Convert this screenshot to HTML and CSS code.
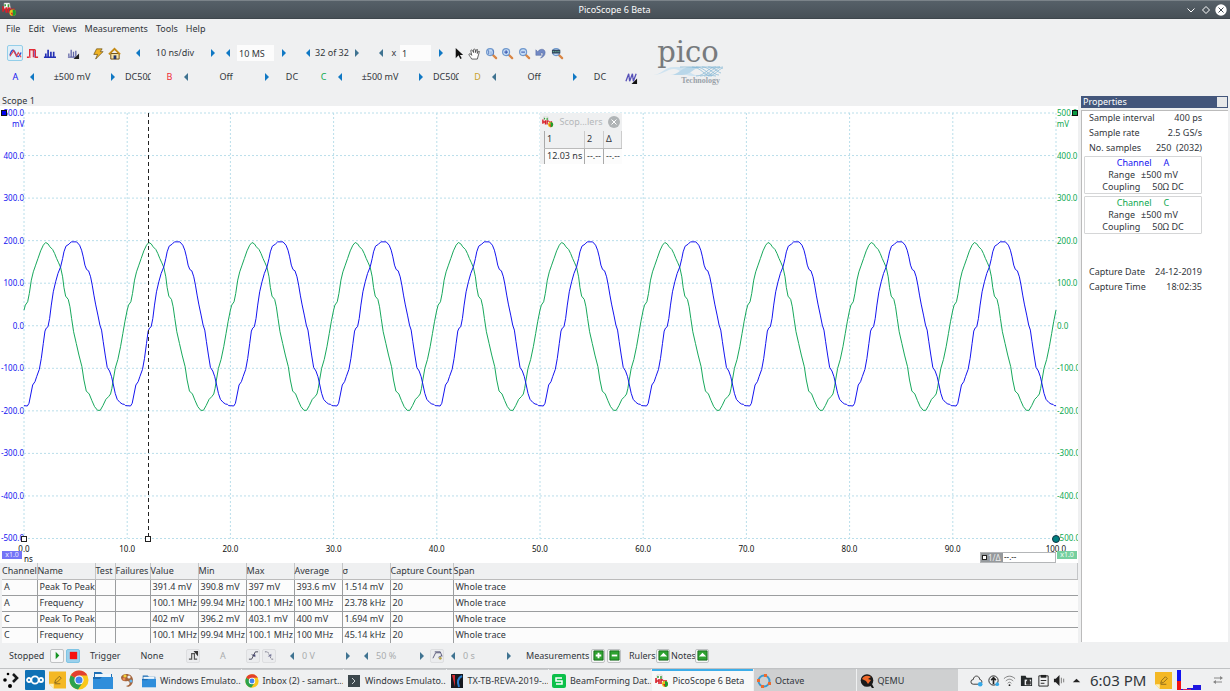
FILE: index.html
```html
<!DOCTYPE html>
<html lang="en">
<head>
<meta charset="utf-8">
<title>PicoScope 6 Beta</title>
<link rel="stylesheet" href="styles.css">
</head>
<body>
<svg class="defs" aria-hidden="true">
  <symbol id="left" viewBox="0 0 8 8"><path d="M6 0v8L2 4z"/></symbol>
  <symbol id="right" viewBox="0 0 8 8"><path d="M2 0v8l4-4z"/></symbol>
  <symbol id="beta" viewBox="0 0 14 14"><path d="M2 1h5l1 5H2z" fill="#fff" stroke="#bbb" stroke-width=".5"/><path d="M3 2v2M6 2v3" stroke="#3a9a3a" stroke-width="1.5"/><path d="M1 4v5M1 7h3M4 5v5M6 5v5M6 6h2M9 6v4M11 6v3" stroke="#d8202a" stroke-width="1.6"/><circle cx="10" cy="10" r="3" fill="#e8c51c"/><path d="M10 7a3 3 0 0 1 0 6z" fill="#1d9a32"/><path d="M8 10h2v3z" fill="#d22"/></symbol>
  <symbol id="lens" viewBox="0 0 14 14"><path d="M8 8l4 4" stroke="#d98645" stroke-width="2.4" stroke-linecap="round"/><circle cx="5.5" cy="5.5" r="3.8" fill="#c5dcf5" stroke="#6f97cc" stroke-width="1.2"/></symbol>
  <symbol id="folder" viewBox="0 0 20 18"><path d="M1 1h7l2 2h9v3H1z" fill="#1f6fb5"/><path d="M2 3h16v4H2z" fill="#eef6fc"/><path d="M0 6h20v12H0z" fill="#2f8edb"/><path d="M0 6h9l-2 2H0z" fill="#1d6db3"/></symbol>
  <symbol id="chrome" viewBox="0 0 20 20"><circle cx="10" cy="10" r="9.5" fill="#f9c81c"/><path d="M10 10L1.8 5.2A9.5 9.5 0 0 0 9 19.4L14 12z" fill="#2ba24c"/><path d="M10 10L1.8 5.2A9.5 9.5 0 0 1 18.4 5.5H10z" fill="#e3402f"/><circle cx="10" cy="10" r="4.6" fill="#fff"/><circle cx="10" cy="10" r="3.5" fill="#4384ee"/></symbol>
  <symbol id="note" viewBox="0 0 18 18"><path d="M0 0h18v18H5L0 13z" fill="#f4b824"/><path d="M0 13h5v5z" fill="#fff0b5"/><path d="M6 12l1-3 4-4 2 2-4 4zM6 13h6" fill="none" stroke="#8b6a1c"/></symbol>
</svg>

<header class="titlebar">
  <svg class="app-icon"><use href="#beta"/></svg>
  <h1>PicoScope 6 Beta</h1>
  <div class="window-buttons">
    <button aria-label="Minimize"><svg viewBox="0 0 12 12"><path d="M2.5 4.5L6 8l3.500-3.500" fill="none" stroke="#fff"/></svg></button>
    <button aria-label="Maximize"><svg viewBox="0 0 12 12"><path d="M6 2.500L9.500 6 6 9.500 2.500 6z" fill="none" stroke="#fff"/></svg></button>
    <button aria-label="Close"><svg viewBox="0 0 12 12"><circle cx="6" cy="6" r="5.7" fill="#fff"/><path d="M3.5 3.5l5 5M8.500 3.500l-5 5" stroke="#3f4a52"/></svg></button>
  </div>
</header>

<nav class="menubar">
  <button>File</button><button>Edit</button><button>Views</button><button>Measurements</button><button>Tools</button><button>Help</button>
</nav>

<section class="toolbars">
  <div class="rows">
    <div class="row">
      <div class="set modes">
        <button class="tool active" aria-label="Scope"><svg viewBox="0 0 14 14"><path d="M1 9c2-7 4-7 6-2s4 4 6-1" fill="none" stroke="#2a55d4" stroke-width="1.4"/><path d="M1 10l4-6 3 6 2-4 3 5" fill="none" stroke="#e2404a" stroke-width="1.2"/></svg></button>
        <button class="tool" aria-label="Persistence"><svg viewBox="0 0 14 14"><path d="M1 11h3V3h4v8M10 3v8h3M4 3h6" fill="none" stroke="#e22b36" stroke-width="1.5"/><path d="M3 11h2V4" fill="none" stroke="#f2a0a4"/><path d="M9 4v7" stroke="#7c6ad0"/></svg></button>
        <button class="tool" aria-label="Spectrum"><svg viewBox="0 0 14 14"><path d="M1 11h13M3 11V7M5.500 11V3M8.500 11V5M11.500 11V5" stroke="#2330b4" stroke-width="1.8"/></svg></button>
      </div>
      <div class="set spaced">
        <button class="tool" aria-label="Channel options"><svg viewBox="0 0 14 14"><path d="M2 10V7M4.500 11V3M7 11V5M9.500 10V4M1 11h9" stroke="#6166a8" stroke-width="1.4"/><path d="M13 7v6H7z" fill="#222"/></svg></button>
        <button class="tool" aria-label="Auto setup"><svg viewBox="0 0 14 14"><path d="M6 2h6l-2 3h3l-8 8 2-5H3z" fill="#f0b323" stroke="#5b4210" stroke-width=".7"/></svg></button>
      </div>
      <button class="tool" aria-label="Home"><svg viewBox="0 0 14 14"><path d="M3 7h9v6H3z" fill="#f7e2a0" stroke="#6a4a10"/><path d="M1 8l6-6 6 6" fill="none" stroke="#c48a14" stroke-width="2"/><path d="M6 9h3v4H6z" fill="#24356e"/></svg></button>
      <div class="stepper timebase"><button class="arrow" aria-label="Less time"><svg><use href="#left"/></svg></button><button class="value">10 ns/div</button><button class="arrow" aria-label="More time"><svg><use href="#right"/></svg></button></div>
      <div class="stepper"><button class="arrow" aria-label="Fewer samples"><svg><use href="#left"/></svg></button><input class="samples" aria-label="Samples" value="10 MS"><button class="arrow" aria-label="More samples"><svg><use href="#right"/></svg></button></div>
      <div class="stepper buffer"><button class="arrow" aria-label="Previous buffer"><svg><use href="#left"/></svg></button><button class="count">32 of 32</button><button class="arrow dim" aria-label="Next buffer"><svg><use href="#right"/></svg></button></div>
      <div class="stepper buffer"><button class="arrow dim" aria-label="Zoom less"><svg><use href="#left"/></svg></button><label class="times" for="zoom">x</label><input class="zoom" id="zoom" value="1"><button class="arrow" aria-label="Zoom more"><svg><use href="#right"/></svg></button></div>
      <div class="pointers">
        <button class="tool" aria-label="Select"><svg viewBox="0 0 14 14"><path d="M4 1v11l3-3 2 4 1.500-1-2-3.500H12z" fill="#111"/></svg></button>
        <button class="tool" aria-label="Hand"><svg viewBox="0 0 14 14"><path d="M4 13c-1-2-3-4-3-5s2-1 3 1L3 4c0-1 1-1 2 0l1 2V3c0-1 1.500-1 2 0v3l1-3c1-1 2 0 1 1v3l1-2c1-1 2 0 1 1l-2 7z" fill="#fff" stroke="#333" stroke-width=".8"/></svg></button>
        <button class="tool" aria-label="Window zoom"><svg viewBox="0 0 14 14"><use href="#lens"/><path d="M3 4h1v4M6.500 5v1M6.500 7v1M8 4h1v4" fill="none" stroke="#5577bb"/></svg></button>
        <button class="tool" aria-label="Zoom in"><svg viewBox="0 0 14 14"><use href="#lens"/><path d="M3.500 5.500h4M5.500 3.500v4" stroke="#2746a8"/></svg></button>
        <button class="tool" aria-label="Zoom out"><svg viewBox="0 0 14 14"><use href="#lens"/><path d="M3.500 5.500h4" stroke="#2746a8"/></svg></button>
        <button class="tool" aria-label="Undo zoom"><svg viewBox="0 0 14 14"><path d="M4 5c3-4 8-3 8 1 0 3-2 5-5 6 3-3 4-7 0-5l1 2H2V3z" fill="#7289c4" stroke="#4b5f98" stroke-width=".5"/></svg></button>
        <button class="tool" aria-label="Full view"><svg viewBox="0 0 14 14"><use href="#lens"/><path d="M1 3h9v4H1z" fill="#33475e"/><path d="M2 5h7" stroke="#7de0b0" stroke-dasharray="1 1"/></svg></button>
      </div>
    </div>
    <div class="row">
      <div class="channel"><button class="letter a">A</button><button class="arrow" aria-label="A range down"><svg><use href="#left"/></svg></button><button class="range">±500 mV</button><button class="arrow" aria-label="A range up"><svg><use href="#right"/></svg></button><button class="coupling">DC50Ω</button></div>
      <div class="channel"><button class="letter b">B</button><button class="arrow dim" aria-label="B range down"><svg><use href="#left"/></svg></button><button class="range">Off</button><button class="arrow" aria-label="B range up"><svg><use href="#right"/></svg></button><button class="coupling">DC</button></div>
      <div class="channel"><button class="letter c">C</button><button class="arrow" aria-label="C range down"><svg><use href="#left"/></svg></button><button class="range">±500 mV</button><button class="arrow" aria-label="C range up"><svg><use href="#right"/></svg></button><button class="coupling">DC50Ω</button></div>
      <div class="channel"><button class="letter d">D</button><button class="arrow dim" aria-label="D range down"><svg><use href="#left"/></svg></button><button class="range">Off</button><button class="arrow" aria-label="D range up"><svg><use href="#right"/></svg></button><button class="coupling">DC</button></div>
      <button class="tool" aria-label="Digital channels"><svg viewBox="0 0 14 14"><path d="M1 11l3-8 1 8 3-8 1 8 3-8" fill="none" stroke="#5650b8" stroke-width="1.4"/><path d="M13 8v6H7z" fill="#111"/></svg></button>
    </div>
  </div>
  <div class="logo">
    <span class="brand">pico</span>
    <svg viewBox="0 0 72 11" aria-hidden="true"><path d="M0 9C10 9 12 1 22 1h6c8 0 10 9 20 9h-8C32 10 28 3 22 3 14 3 12 9 0 9z" fill="#cfe3f0"/><path d="M18 9C27 9 29 1 38 1h12c-8 0-11 8-20 8z" fill="#b9d7e9"/><g fill="none" stroke="#7fb4d4" stroke-width=".7"><path d="M44 10C53 10 56 1 64 1M48 10C57 10 60 1 68 1M52 10C61 10 64 1 71 1M56 10c7 0 10-7 15-8M40 1c9 0 12 9 20 9M44 1c9 0 12 9 20 9M50 1c8 0 11 8 17 8M56 1c7 0 9 5 13 6M28 1h40"/></g></svg>
    <span class="tagline">Technology</span>
  </div>
</section>

<main class="workspace">
  <section class="scope">
    <h2>Scope 1</h2>
    <div class="stage">
      <div class="axis-y left"><span>500.0</span><span>400.0</span><span>300.0</span><span>200.0</span><span>100.0</span><span>0.0</span><span>-100.0</span><span>-200.0</span><span>-300.0</span><span>-400.0</span><span>-500.0</span></div>
      <div class="plot">
        <svg class="grid">
          <g class="lines">
            <line x1="0" x2="100%" y1="0" y2="0"/><line x1="0" x2="100%" y1="10%" y2="10%"/><line x1="0" x2="100%" y1="20%" y2="20%"/><line x1="0" x2="100%" y1="30%" y2="30%"/><line x1="0" x2="100%" y1="40%" y2="40%"/><line x1="0" x2="100%" y1="50%" y2="50%"/><line x1="0" x2="100%" y1="60%" y2="60%"/><line x1="0" x2="100%" y1="70%" y2="70%"/><line x1="0" x2="100%" y1="80%" y2="80%"/><line x1="0" x2="100%" y1="90%" y2="90%"/><line x1="0" x2="100%" y1="100%" y2="100%"/>
            <line y1="0" y2="100%" x1="0" x2="0"/><line y1="0" y2="100%" x1="10%" x2="10%"/><line y1="0" y2="100%" x1="20%" x2="20%"/><line y1="0" y2="100%" x1="30%" x2="30%"/><line y1="0" y2="100%" x1="40%" x2="40%"/><line y1="0" y2="100%" x1="50%" x2="50%"/><line y1="0" y2="100%" x1="60%" x2="60%"/><line y1="0" y2="100%" x1="70%" x2="70%"/><line y1="0" y2="100%" x1="80%" x2="80%"/><line y1="0" y2="100%" x1="90%" x2="90%"/><line y1="0" y2="100%" x1="100%" x2="100%"/>
          </g>
        </svg>
        <svg class="traces" viewBox="70 -352 3100 1278" preserveAspectRatio="none">
          <defs>
            <path id="wave-a" d="M70 527L80 528 85 520 90 495 96 465 103 455 108 440 116 418 122 385 128 340 133 303 137 294 142 290 147 265 152 225 158 185 165 155 172 130 180 110 186 85 190 65 196 48 205 42 212 35 228 35 237 45 243 60 248 80 253 105 258 118 264 122 270 140 275 165 280 195 285 222 292 255 298 285 303 300 308 335 314 375 320 412 327 423 333 440 338 462 344 490 350 508 358 517 365 522 371 523 375 527 380 527"/>
            <path id="wave-c" d="M70 240L74 225 81 215 86 190 92 150 98 125 105 105 112 85 120 62 128 45 135 37 142 41 148 50 156 58 162 70 168 85 174 98 180 112 186 140 190 172 195 198 203 208 208 230 213 265 219 305 227 340 235 375 244 410 250 450 257 483 266 492 274 512 282 530 291 541 299 541 307 527 316 508 324 500 330 492 334 475 338 450 344 415 352 388 360 350 367 310 373 275 380 240"/>
          </defs>
          <g class="trace-c"><use href="#wave-c"/><use href="#wave-c" x="310"/><use href="#wave-c" x="620"/><use href="#wave-c" x="930"/><use href="#wave-c" x="1240"/><use href="#wave-c" x="1550"/><use href="#wave-c" x="1860"/><use href="#wave-c" x="2170"/><use href="#wave-c" x="2480"/><use href="#wave-c" x="2790"/></g>
          <g class="trace-a"><use href="#wave-a"/><use href="#wave-a" x="310"/><use href="#wave-a" x="620"/><use href="#wave-a" x="930"/><use href="#wave-a" x="1240"/><use href="#wave-a" x="1550"/><use href="#wave-a" x="1860"/><use href="#wave-a" x="2170"/><use href="#wave-a" x="2480"/><use href="#wave-a" x="2790"/></g>
        </svg>
        <i class="ruler"></i>
        <i class="handle origin"></i><i class="handle first"></i><i class="handle dot"></i>
        <section class="legend">
          <header><svg><use href="#beta"/></svg><span>Scop...lers</span><button aria-label="Close legend"><svg viewBox="0 0 12 12"><circle cx="6" cy="6" r="6" fill="#b0b4b6"/><path d="M3.500 3.500l5 5M8.500 3.500l-5 5" stroke="#fff"/></svg></button></header>
          <table><tr><th>1</th><th>2</th><th>Δ</th></tr><tr><td>12.03 ns</td><td>--.--</td><td>--.--</td></tr></table>
        </section>
      </div>
      <div class="axis-y right"><span>500.0</span><span>400.0</span><span>300.0</span><span>200.0</span><span>100.0</span><span>0.0</span><span>-100.0</span><span>-200.0</span><span>-300.0</span><span>-400.0</span><span>-500.0</span></div>
      <div class="axis-x"><span>0.0</span><span>10.0</span><span>20.0</span><span>30.0</span><span>40.0</span><span>50.0</span><span>60.0</span><span>70.0</span><span>80.0</span><span>90.0</span><span>100.0</span></div>
      <span class="unit left-unit">mV</span><span class="unit right-unit">mV</span><span class="unit time-unit">ns</span>
      <i class="marker marker-a"></i><i class="marker marker-c"></i>
      <span class="scale scale-a">x1.0</span><span class="scale scale-c">x1.0</span>
      <div class="inverse"><b><i></i>1/Δ</b><span>--.--</span></div>
    </div>
    <table class="measurements">
      <colgroup><col class="w-channel"><col class="w-name"><col class="w-test"><col class="w-fail"><col class="w-num"><col class="w-num"><col class="w-num"><col class="w-num"><col class="w-num"><col class="w-count"><col></colgroup>
      <thead><tr><th>Channel</th><th>Name</th><th>Test</th><th>Failures</th><th>Value</th><th>Min</th><th>Max</th><th>Average</th><th>σ</th><th>Capture Count</th><th>Span</th></tr></thead>
      <tbody>
        <tr><td>A</td><td>Peak To Peak</td><td></td><td></td><td>391.4 mV</td><td>390.8 mV</td><td>397 mV</td><td>393.6 mV</td><td>1.514 mV</td><td>20</td><td>Whole trace</td></tr>
        <tr><td>A</td><td>Frequency</td><td></td><td></td><td>100.1 MHz</td><td>99.94 MHz</td><td>100.1 MHz</td><td>100 MHz</td><td>23.78 kHz</td><td>20</td><td>Whole trace</td></tr>
        <tr><td>C</td><td>Peak To Peak</td><td></td><td></td><td>402 mV</td><td>396.2 mV</td><td>403.1 mV</td><td>400 mV</td><td>1.694 mV</td><td>20</td><td>Whole trace</td></tr>
        <tr><td>C</td><td>Frequency</td><td></td><td></td><td>100.1 MHz</td><td>99.94 MHz</td><td>100.1 MHz</td><td>100 MHz</td><td>45.14 kHz</td><td>20</td><td>Whole trace</td></tr>
      </tbody>
    </table>
  </section>
  <aside class="properties">
    <header><h2>Properties</h2><button aria-label="Close properties"></button></header>
    <div class="panel">
      <dl><dt>Sample interval</dt><dd>400 ps</dd><dt>Sample rate</dt><dd>2.5 GS/s</dd><dt>No. samples</dt><dd>250&nbsp; (2032)</dd></dl>
      <section class="card"><h3 class="a"><span>Channel</span><span>A</span></h3><p class="near"><span>Range</span><span>±500 mV</span></p><p><span>Coupling</span><span>50Ω DC</span></p></section>
      <section class="card"><h3 class="c"><span>Channel</span><span>C</span></h3><p class="near"><span>Range</span><span>±500 mV</span></p><p><span>Coupling</span><span>50Ω DC</span></p></section>
      <dl class="capture"><dt>Capture Date</dt><dd>24-12-2019</dd><dt>Capture Time</dt><dd>18:02:35</dd></dl>
    </div>
  </aside>
</main>

<section class="controls">
  <span class="status">Stopped</span>
  <button class="key" aria-label="Start"><svg viewBox="0 0 12 12"><path d="M4 2v8l4-4z" fill="#159322"/></svg></button>
  <button class="key pressed" aria-label="Stop"><svg viewBox="0 0 12 12"><path d="M2 2h8v8H2z" fill="#f51010"/></svg></button>
  <span class="trigger">Trigger</span>
  <button class="mode">None</button>
  <button class="key faint advanced" aria-label="Advanced trigger"><svg viewBox="0 0 12 12"><path d="M1 10h3V4h3v6h3" fill="none" stroke="#555" stroke-width="1.300"/><path d="M6 1h5v6z" fill="#333"/></svg></button>
  <span class="source muted">A</span>
  <button class="key faint" aria-label="Rising edge"><svg viewBox="0 0 12 12"><path d="M1 10h3l4-8h3M4 5l3 2" fill="none" stroke="#445"/><path d="M5 5h3v3z" fill="#447"/></svg></button>
  <button class="key faint" aria-label="Falling edge"><svg viewBox="0 0 12 12"><path d="M1 2h3l4 8h3" fill="none" stroke="#778" stroke-dasharray="2 1"/><path d="M4 7h4V4z" fill="#779"/></svg></button>
  <div class="field level"><button class="arrow dim" aria-label="Lower threshold"><svg><use href="#left"/></svg></button><span class="muted">0 V</span><button class="arrow dim" aria-label="Raise threshold"><svg><use href="#right"/></svg></button></div>
  <div class="field"><button class="arrow dim" aria-label="Less pre-trigger"><svg><use href="#left"/></svg></button><span class="muted">50 %</span><button class="arrow dim" aria-label="More pre-trigger"><svg><use href="#right"/></svg></button></div>
  <button class="key faint" aria-label="Post-trigger delay"><svg viewBox="0 0 12 12"><path d="M1 9l3-6h5M3 2h6l2 5M7 8l4-2" fill="none" stroke="#557"/><circle cx="9" cy="9" r="1.500" fill="#b8a34a"/></svg></button>
  <div class="field"><button class="arrow dim" aria-label="Less delay"><svg><use href="#left"/></svg></button><span class="muted">0 s</span><button class="arrow dim" aria-label="More delay"><svg><use href="#right"/></svg></button></div>
  <span class="measure">Measurements</span>
  <button class="key" aria-label="Add measurement"><svg viewBox="0 0 12 12"><path d="M1 1h10v10H1z" fill="#2fa331" stroke="#176a1b"/><path d="M3 6h6M6 3v6" stroke="#fff" stroke-width="2"/></svg></button>
  <button class="key" aria-label="Remove measurement"><svg viewBox="0 0 12 12"><path d="M1 1h10v10H1z" fill="#2fa331" stroke="#176a1b"/><path d="M3 6h6" stroke="#fff" stroke-width="2"/></svg></button>
  <span class="rulers">Rulers</span>
  <button class="key" aria-label="Show rulers"><svg viewBox="0 0 12 12"><path d="M1 1h10v10H1z" fill="#2fa331" stroke="#176a1b"/><path d="M2 7h8L6 3z" fill="#fff"/></svg></button>
  <span class="notes">Notes</span>
  <button class="key" aria-label="Show notes"><svg viewBox="0 0 12 12"><path d="M1 1h10v10H1z" fill="#2fa331" stroke="#176a1b"/><path d="M2 7h8L6 3z" fill="#fff"/></svg></button>
</section>

<footer class="taskbar">
  <div class="launchers">
    <button aria-label="Application menu"><svg viewBox="0 0 20 20"><path d="M12 4l4 4-4 4" fill="none" stroke="#16191b" stroke-width="2.600"/><circle cx="7" cy="4" r="1.300"/><circle cx="4" cy="10" r="1.800"/><circle cx="9" cy="16" r="2"/></svg></button>
    <button aria-label="Nextcloud"><svg viewBox="0 0 20 20"><rect width="20" height="20" rx="1" fill="#0f71b5"/><g fill="none" stroke="#fff" stroke-width="1.800"><circle cx="10" cy="10" r="3.600"/><circle cx="4" cy="10" r="2"/><circle cx="16" cy="10" r="2"/></g></svg></button>
    <button aria-label="Sticky notes"><svg class="small"><use href="#note"/></svg></button>
    <button aria-label="Chrome"><svg><use href="#chrome"/></svg></button>
    <button aria-label="Files"><svg><use href="#folder"/></svg></button>
    <button aria-label="Palette"><svg viewBox="0 0 20 20"><path d="M4 7c2-5 12-4 12 3 0 6-5 8-7 6 5-1 4-4 2-5-4 1-7 0-7-4z" fill="#a4643a"/><circle cx="8" cy="6" r="1.600" fill="#f4d23a"/><circle cx="12" cy="7" r="1.600" fill="#eee"/><circle cx="14" cy="11" r="1.600" fill="#6ab4e8"/><circle cx="7" cy="9" r="1.500" fill="#f08a52"/></svg></button>
  </div>
  <div class="tasks">
    <button><svg><use href="#folder"/></svg>Windows Emulato...</button>
    <button><svg><use href="#chrome"/></svg>Inbox (2) - samart...</button>
    <button><svg viewBox="0 0 14 14"><path d="M1 1h12v12H1z" fill="#3d484d"/><path d="M5 4l3 3-3 3" fill="none" stroke="#cfd6d9"/></svg>Windows Emulato...</button>
    <button><svg viewBox="0 0 14 14"><path d="M1 0h12v14H1z" fill="#16191f"/><path d="M2 1h3v12z" fill="#d62a32"/><path d="M12 2C8 4 7 8 9 13" fill="none" stroke="#2a7fd0" stroke-width="2"/></svg>TX-TB-REVA-2019-...</button>
    <button><svg viewBox="0 0 14 14"><rect width="14" height="14" rx="2" fill="#0cc04a"/><path d="M10 4H4v3h6v3H4" fill="none" stroke="#fff" stroke-width="1.500"/></svg>BeamForming Dat...</button>
    <button class="current"><svg><use href="#beta"/></svg>PicoScope 6 Beta</button>
    <button class="group"><svg viewBox="0 0 14 14"><circle cx="7" cy="7" r="5.500" fill="none" stroke="#3a9ad0" stroke-width="2"/><path d="M0 5h3v3H0zM7 0h3v3H7zM11 8h3v3h-3zM4 11h3v3H4z" fill="#ee6b2d"/></svg>Octave</button>
    <button class="group"><svg viewBox="0 0 14 14"><circle cx="7" cy="6.500" r="6.300" fill="#1a1a1a"/><path d="M8 9l4 5h2l-3-6z" fill="#1a1a1a"/><path d="M2 5c2-4 6-4 9-2L8 5l3 1-3 4-2-3z" fill="#f0682a"/></svg>QEMU</button>
  </div>
  <div class="tray">
    <button aria-label="Cloud sync"><svg viewBox="0 0 14 14"><path d="M3.500 11a2.500 2.500 0 0 1 0-5C4 1 10 1 10.500 6c3 0 3 5 0 5z" fill="none" stroke="#333"/><circle cx="11" cy="11" r="2.500" fill="#36a9e8"/></svg></button>
    <button aria-label="Updates"><svg viewBox="0 0 14 14"><circle cx="7" cy="7" r="5" fill="none" stroke="#222"/><path d="M7 11V4M4.500 6.500L7 4l2.500 2.500" fill="none" stroke="#222" stroke-width="1.800"/><circle cx="11" cy="11" r="2" fill="#36a9e8"/></svg></button>
    <button aria-label="Wireless"><svg viewBox="0 0 14 14"><path d="M1 5c4-3.500 8-3.500 12 0M3 7.500c3-2.500 5-2.500 8 0M5 10c1.500-1.500 2.500-1.500 4 0" fill="none" stroke="#777"/><circle cx="7" cy="12" r="1" fill="#222"/></svg></button>
    <button aria-label="Vault"><svg viewBox="0 0 14 14"><path d="M1 2h5l1 2h6v9H1z" fill="#25292b"/><path d="M5 6h7v6H5z" fill="#eff0f1"/><path d="M7 8h4v3H7zM8 8V6h2v2" fill="#333" stroke="#333"/></svg></button>
    <button aria-label="Clipboard"><svg viewBox="0 0 14 14"><path d="M2 2h10v11H2z" fill="none" stroke="#222"/><path d="M4 1h6v3H4z" fill="#222"/><path d="M4 7h6M4 10h4" stroke="#222"/></svg></button>
    <button aria-label="Volume"><svg viewBox="0 0 14 14"><path d="M1 5h2l4-4v12L3 9H1z" fill="#222"/><path d="M9 4v6M11.500 5v4" stroke="#777"/></svg></button>
    <button aria-label="Show hidden icons"><svg viewBox="0 0 14 14"><path d="M3 9l4-4 4 4z" fill="#222"/></svg></button>
  </div>
  <time>6:03 PM</time>
  <button class="sticky" aria-label="Notes"><svg><use href="#note"/></svg></button>
  <svg class="load" viewBox="0 0 26 22" aria-label="System load"><path d="M1 1h4v11H1z" fill="#1212f0"/><path d="M1 12h4v9H1z" fill="#f01414"/><path d="M5 20h6v1H5zM11 19h6v2h-6zM17 16h8v5h-8z" fill="#1f17e0"/><path d="M7 20h8v1H7z" fill="#d02060"/></svg>
  <button class="settings" aria-label="Panel settings"><svg viewBox="0 0 14 14"><path d="M3 5h8M3 9h8" stroke="#888"/><path d="M9 3l3 2-3 2zM5 7L2 9l3 2z" fill="#888"/></svg></button>
</footer>
</body>
</html>
```
FILE: styles.css
```css
* { box-sizing: border-box; }
body {
  margin: 0;
  min-height: 100vh;
  display: flex;
  flex-direction: column;
  background: #eff0f1;
  color: #31363b;
  font: 9px/12px "Noto Sans", sans-serif;
}
h1, h2, h3, p, dl, dd { margin: 0; font-size: inherit; font-weight: normal; }
i { font-style: normal; }
button, input {
  margin: 0;
  padding: 0;
  border: 0;
  background: none;
  color: inherit;
  font: inherit;
  white-space: nowrap;
}
button { display: flex; align-items: center; justify-content: center; }
svg { display: block; flex: none; }
.defs { position: absolute; width: 0; height: 0; }
.a { color: #1414f0; }
.b { color: #f02b36; }
.c { color: #0ca850; }
.d { color: #caa12b; }
.muted { color: #a9acae; }

.titlebar {
  height: 19px;
  display: grid;
  grid-template-columns: 1fr auto 1fr;
  align-items: center;
  padding: 0 3px 0 2px;
  border-top: 1px solid #7b8389;
  border-bottom: 1px solid #3e464c;
  background: linear-gradient(#566068, #475057);
  color: #fcfcfc;
}
.app-icon { width: 15px; height: 15px; }
.window-buttons { display: flex; justify-content: flex-end; gap: 3px; }
.window-buttons svg { width: 12px; height: 12px; }

.menubar { height: 19px; display: flex; align-items: center; gap: 8px; padding-left: 6px; }

.toolbars { display: flex; padding: 3px 0 6px 7px; }
.row { height: 24px; display: flex; align-items: center; }
.tool { width: 16px; height: 16px; }
.tool svg { width: 13px; height: 13px; }
.tool.active { border: 1px solid #93cee9; border-radius: 2px; background: #e2eff7; }
.modes { display: flex; gap: 1px; }
.spaced { display: flex; gap: 8px; padding: 0 1px 0 8px; }
.arrow { width: 15px; height: 16px; fill: #1078c4; }
.arrow.dim { fill: #3f7391; }
.arrow svg { width: 8px; height: 8px; }
.stepper { display: flex; align-items: center; }
.timebase { padding: 0 0 0 8px; }
.value { width: 60px; }
.samples { width: 37px; height: 16px; margin: 0 2px; padding-left: 2px; background: #fcfcfc; }
.buffer { padding-left: 9px; }
.count { width: 34px; }
.times { width: 12px; text-align: center; }
.zoom { width: 31px; height: 16px; margin-right: 2px; padding-left: 2px; background: #fcfcfc; }
.pointers { width: 115px; display: flex; justify-content: space-between; margin-left: 2px; }
.channel { width: 154px; display: flex; align-items: center; }
.letter { width: 17px; }
.range { width: 66px; }
.coupling { width: 26px; margin-left: 5px; display: block; overflow: hidden; text-align: center; }

.logo { display: flex; flex-direction: column; align-items: center; width: 72px; margin-left: 13px; color: #777a7d; }
.brand { font: 29px/30px "DejaVu Serif", serif; margin-top: -4px; }
.logo svg { width: 72px; height: 11px; margin-top: -1px; }
.tagline { align-self: flex-end; padding-right: 4px; font: bold 8px/8px "Liberation Serif", serif; color: #9aa2a9; }

.workspace { flex: 1; display: grid; grid-template-columns: 1fr 147px; gap: 3px; padding-right: 2px; }
.scope { display: flex; flex-direction: column; min-width: 0; }
.scope h2 { padding-left: 2px; line-height: 11px; }
.stage {
  flex: 1;
  position: relative;
  display: grid;
  grid-template: 1fr 24px / 24px 1fr 22px;
  padding-top: 7px;
  background: #fff;
  font-size: 8px;
  line-height: 10px;
}
.axis-y { display: flex; flex-direction: column; justify-content: space-between; margin: -5px 0; white-space: nowrap; }
.axis-y.left { align-items: flex-end; color: #1414f0; }
.axis-y.right { align-items: flex-start; overflow: hidden; padding-left: 1px; color: #0ca850; }
.axis-x { grid-column: 2; display: flex; justify-content: space-between; margin: 5px -15px 0; color: #111; }
.axis-x span { width: 30px; text-align: center; }
.plot { position: relative; }
.grid, .traces { position: absolute; inset: 0; width: 100%; height: 100%; overflow: visible; }
.lines { stroke: #b9deea; stroke-dasharray: 2 2; }
.traces { fill: none; }
.traces path { vector-effect: non-scaling-stroke; }
.trace-a { stroke: #1414f0; }
.trace-c { stroke: #18a85c; }
.ruler { position: absolute; left: 12%; top: 0; bottom: 0; width: 1px; background: repeating-linear-gradient(#222 0 4px, transparent 4px 7px); }
.handle { position: absolute; bottom: -3px; width: 6px; height: 6px; border: 1px solid #222; background: #fff; }
.origin { left: -3px; }
.first { left: calc(12% - 3px); }
.dot { right: -4px; width: 8px; height: 8px; bottom: -4px; border: 1px solid #134; border-radius: 50%; background: #008080; }
.unit { position: absolute; }
.left-unit { left: 12px; top: 13px; color: #1414f0; }
.right-unit { right: 9px; top: 13px; color: #0ca850; }
.time-unit { left: 24px; bottom: -1px; color: #111; }
.marker { position: absolute; top: 4px; width: 6px; height: 6px; border: 1px solid #111; }
.marker-a { left: 1px; background: #0000f0; }
.marker-c { right: 0; background: #0a9a42; }
.scale { position: absolute; bottom: 4px; width: 20px; height: 8px; font-size: 7px; line-height: 8px; text-align: center; color: #e8e8ff; }
.scale-a { left: 2px; background: #7474f6; }
.scale-c { right: 1px; background: #76cf9f; color: #effff5; }
.inverse { position: absolute; right: 22px; bottom: 0; width: 76px; height: 11px; display: flex; align-items: center; gap: 1px; border: 1px solid #b4b6b8; background: #fff; color: #222; }
.inverse b { width: 22px; height: 9px; display: flex; align-items: center; gap: 1px; padding-left: 1px; background: #95999c; color: #eee; font-weight: normal; line-height: 9px; }
.inverse i { width: 5px; height: 5px; border: 1px solid #222; background: #fff; }

.legend { position: absolute; left: 50%; top: 0; width: 82px; background: #eff0f1; font-size: 9px; line-height: 12px; }
.legend header { height: 18px; display: flex; align-items: center; justify-content: space-between; padding: 0 2px; color: #b4b7b9; }
.legend header svg { width: 12px; height: 12px; }
.legend table { width: 78px; margin-left: 4px; table-layout: fixed; border-collapse: collapse; }
.legend th, .legend td { height: 17px; padding: 0 0 0 2px; border-left: 1px solid #aaa; text-align: left; font-weight: normal; white-space: nowrap; }
.legend th { border-right: 1px solid #ccc; border-bottom: 1px solid #bbb; }
.legend th:first-child { width: 40px; }
.legend th:nth-child(2) { width: 19px; }
.legend td { height: 16px; background: #fcfcfc; }

.measurements { width: calc(100% - 2px); margin-left: 2px; table-layout: fixed; border-collapse: collapse; background: #fcfcfc; border-top: 1px solid #eff0f1; }
.measurements th, .measurements td { height: 16px; padding: 0 0 0 2px; border-right: 1px solid #9b9d9f; text-align: left; font-weight: normal; line-height: 12px; white-space: nowrap; }
.measurements th { padding-left: 0; border-right-color: #c4c6c8; background: #eff0f1; border-bottom: 1px solid #bbb; }
.measurements td { border-bottom: 1px solid #9b9d9f; }
.measurements tr:last-child td { border-bottom: 0; }
.measurements td:last-child { border-right: 0; }
.w-channel { width: 35px; }
.w-name { width: 58px; }
.w-test { width: 20px; }
.w-fail { width: 35px; }
.w-num { width: 48px; }
.w-count { width: 63px; }

.properties { display: flex; flex-direction: column; gap: 2px; padding: 1px 0; }
.properties header { height: 12px; display: flex; align-items: center; justify-content: space-between; padding-left: 2px; background: #43567b; color: #fff; }
.properties header button { width: 10px; height: 10px; margin-right: 1px; background: #e7e8e9; }
.panel { flex: 1; padding: 0 26px 0 2px; border-left: 1px solid #bbb; border-top: 1px solid #bbb; background: #fff; }
.properties dl { display: grid; grid-template-columns: 1fr auto; row-gap: 3px; padding: 1px 0 2px 5px; }
.properties dd { text-align: right; }
.card { margin-bottom: 2px; border: 1px solid #d5d6d7; border-radius: 1px; }
.card h3, .card p { display: flex; justify-content: center; gap: 12px; }
.card .near { gap: 6px; }
.properties .capture { padding-top: 30px; }

.controls { height: 26px; display: flex; align-items: center; padding-left: 9px; border-bottom: 1px solid #c0c2c4; }
.key { width: 14px; height: 14px; margin: 0 1px; border: 1px solid #c0c2c4; border-radius: 2px; background: #f7f7f8; }
.key svg { width: 11px; height: 11px; }
.key.faint { border-color: #dddee0; background: #ebecee; }
.key.pressed { border-color: #7fc4e4; background: #9ad0ec; }
.status { width: 40px; }
.trigger { width: 59px; padding-left: 9px; }
.mode { width: 24px; }
.advanced { margin-left: 22px; }
.source { width: 44px; text-align: center; }
.field { display: flex; align-items: center; }
.field.level { padding: 0 3px 0 7px; }
.field .muted { width: 41px; padding-left: 3px; }
.measure { width: 74px; padding-left: 10px; }
.rulers { width: 33px; padding-left: 7px; }
.notes { width: 23px; }

.taskbar { height: 22px; display: flex; align-items: center; }
.launchers { width: 137px; display: flex; justify-content: space-between; padding: 0 0 0 1px; }
.launchers svg { width: 20px; height: 20px; }
.launchers .small { width: 17px; height: 18px; }
.tasks { flex: 0 1 819px; display: grid; grid-template-columns: repeat(8, 1fr); gap: 1px; height: 22px; margin-left: 2px; }
.tasks button { gap: 4px; justify-content: flex-start; padding-left: 3px; border-top: 1px solid #c9cbcd; overflow: hidden; }
.tasks svg { width: 14px; height: 14px; }
.tasks .current { border-top: 2px solid #3daee9; background: #f7f8f8; }
.tasks .group { background: #cfd0d1; }
.tray { width: 113px; display: flex; justify-content: space-between; margin-left: 12px; }
.tray svg { width: 13px; height: 13px; }
.taskbar time { margin-left: 7px; font-size: 15px; line-height: 20px; white-space: nowrap; }
.sticky { margin-left: auto; }
.sticky svg { width: 17px; height: 17px; }
.load { width: 26px; height: 22px; margin-left: 4px; }
.settings { margin: 0 5px 0 9px; }
.settings svg { width: 14px; height: 14px; }
```
